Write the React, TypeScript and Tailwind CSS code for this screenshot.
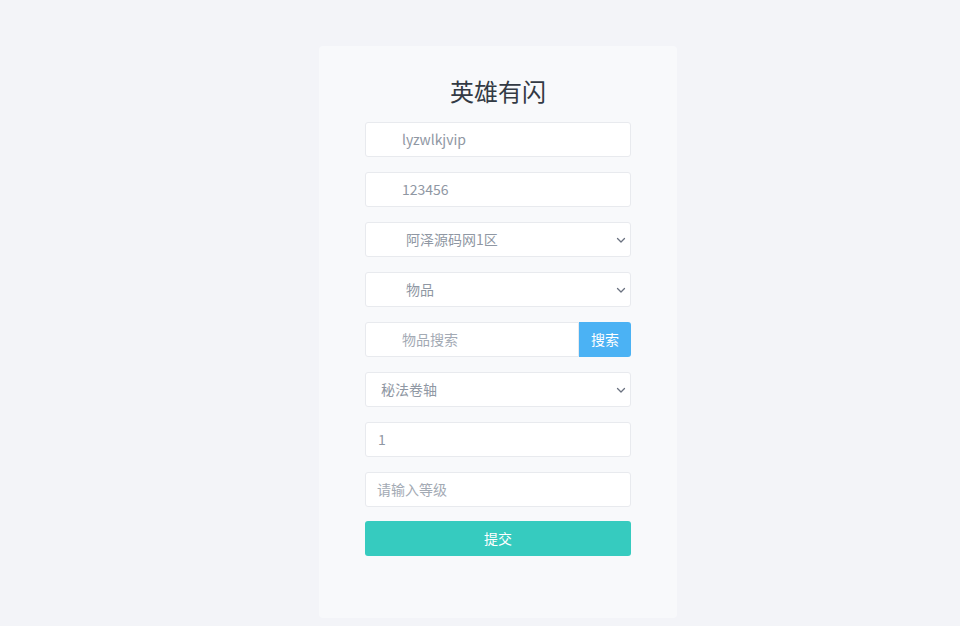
import React from "react";

const Chevron = () => (
  <svg width="10" height="10" viewBox="0 0 10 10" className="shrink-0">
    <path d="M1.5 3.5 L5 7 L8.5 3.5" fill="none" stroke="#6b7280" strokeWidth="1.3" strokeLinecap="round" strokeLinejoin="round" />
  </svg>
);

const font = { fontFamily: '"Noto Sans CJK SC", "Noto Sans", sans-serif' };

export default function App() {
  return (
    <div className="w-[960px] h-[626px] bg-[#f3f4f8] flex pl-[319px] pt-[46px]" style={font}>
      <div className="w-[358px] h-[572px] bg-[#f8f9fb] rounded-[4px] flex flex-col items-center">
        <div className="mt-[28px] h-[34px] text-[24px] leading-[34px] text-[#333a44]">英雄有闪</div>
        <div className="mt-[14px] w-[266px] flex flex-col gap-[15px]">
          <div className="h-[35px] bg-white border border-[#e8eaee] rounded-[3px] flex items-center pl-[36px] text-[14px] text-[#8f97a3]">lyzwlkjvip</div>
          <div className="h-[35px] bg-white border border-[#e8eaee] rounded-[3px] flex items-center pl-[36px] text-[14px] text-[#8f97a3]">123456</div>
          <div className="h-[35px] bg-white border border-[#e8eaee] rounded-[3px] flex items-center pl-[40px] pr-[4px] text-[14px] text-[#8f97a3] justify-between">
            <span>阿泽源码网1区</span>
            <Chevron />
          </div>
          <div className="h-[35px] bg-white border border-[#e8eaee] rounded-[3px] flex items-center pl-[40px] pr-[4px] text-[14px] text-[#8f97a3] justify-between">
            <span>物品</span>
            <Chevron />
          </div>
          <div className="h-[35px] flex">
            <div className="flex-1 bg-white border border-[#e8eaee] rounded-l-[3px] flex items-center pl-[36px] text-[14px] text-[#a3aab4]">物品搜索</div>
            <div className="w-[52px] bg-[#4bb2f4] rounded-r-[3px] flex items-center justify-center text-[14px] text-white">搜索</div>
          </div>
          <div className="h-[35px] bg-white border border-[#e8eaee] rounded-[3px] flex items-center pl-[15px] pr-[4px] text-[14px] text-[#8f97a3] justify-between">
            <span>秘法卷轴</span>
            <Chevron />
          </div>
          <div className="h-[35px] bg-white border border-[#e8eaee] rounded-[3px] flex items-center pl-[12px] text-[14px] text-[#8f97a3]">1</div>
          <div className="h-[35px] bg-white border border-[#e8eaee] rounded-[3px] flex items-center pl-[11px] text-[14px] text-[#a3aab4]">请输入等级</div>
        </div>
        <div className="mt-[14px] w-[266px] h-[35px] bg-[#36cbbf] rounded-[3px] flex items-center justify-center text-[14px] text-white">提交</div>
      </div>
    </div>
  );
}
